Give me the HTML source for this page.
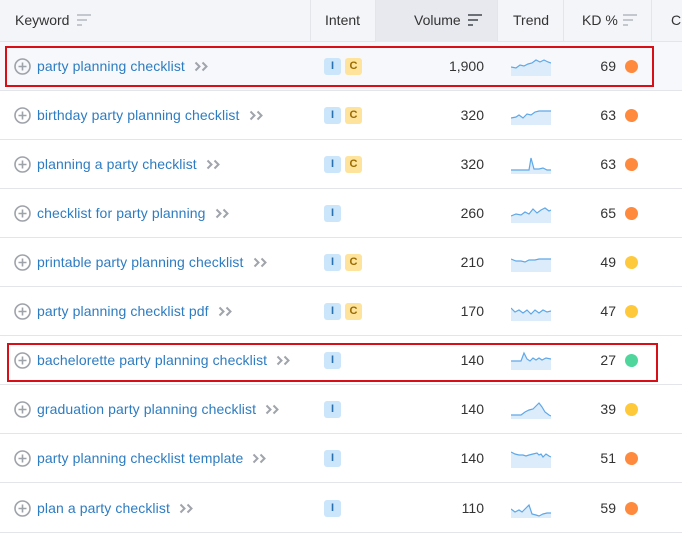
<!DOCTYPE html>
<html><head><meta charset="utf-8"><style>
*{margin:0;padding:0;box-sizing:border-box}
body{width:682px;height:535px;overflow:hidden;background:#fff;font-family:"Liberation Sans",sans-serif;font-size:14px;color:#333;position:relative}
.hdr{position:absolute;left:0;top:0;width:682px;height:42px;background:#f4f5f9;border-bottom:1px solid #e3e5ea}
.hv{position:absolute;left:375px;top:0;width:122px;height:42px;background:#e8e9ee}
.vl{position:absolute;top:0;width:1px;height:42px;background:#e3e5ea}
.ht{position:absolute;top:12px;color:#333;font-size:14px}
.si{position:absolute;top:14px}
.row{position:absolute;left:0;width:682px;height:49px;border-bottom:1px solid #e3e5ea}
.row.hl{background:#f7f8fb}
.plus{position:absolute;left:14px;top:16px;width:17px;height:17px}
.kw{position:absolute;left:37px;top:16px;color:#2d7cc1;white-space:nowrap;letter-spacing:0.1px}
.kw svg{margin-left:9px;vertical-align:-1px}
.bI,.bC{position:absolute;top:16px;width:17px;height:17px;border-radius:3px;font-size:11px;font-weight:bold;text-align:center;line-height:17px}
.bI{left:324px;background:#cbe5fb;color:#2a6fae}
.bC{left:345px;background:#fde39c;color:#9b6a00}
.vol{position:absolute;right:198px;top:16px}
.tr{position:absolute;left:511px;top:15px}
.kd{position:absolute;right:66px;top:16px}
.dot{position:absolute;left:625px;top:18px;width:13px;height:13px;border-radius:50%}
.o{background:#ff8a3d}.y{background:#ffc93c}.g{background:#4fd69c}
.box{position:absolute;border:2px solid #d90f17}
</style></head><body>
<div class="hdr">
<div class="hv"></div>
<div class="vl" style="left:310px"></div><div class="vl" style="left:375px"></div><div class="vl" style="left:497px"></div><div class="vl" style="left:563px"></div><div class="vl" style="left:651px"></div>
<div class="ht" style="left:15px">Keyword</div>
<svg class="si" style="left:77px" width="14" height="12"><g stroke="#c4c7cd" stroke-width="2"><line x1="0" y1="1" x2="14" y2="1"/><line x1="0" y1="6" x2="10" y2="6"/><line x1="0" y1="11" x2="5" y2="11"/></g></svg>
<div class="ht" style="left:325px">Intent</div>
<div class="ht" style="left:414px">Volume</div>
<svg class="si" style="left:468px" width="14" height="12"><g stroke="#6b6f76" stroke-width="2"><line x1="0" y1="1" x2="14" y2="1"/><line x1="0" y1="6" x2="10" y2="6"/><line x1="0" y1="11" x2="5" y2="11"/></g></svg>
<div class="ht" style="left:513px">Trend</div>
<div class="ht" style="left:582px">KD %</div>
<svg class="si" style="left:623px" width="14" height="12"><g stroke="#c4c7cd" stroke-width="2"><line x1="0" y1="1" x2="14" y2="1"/><line x1="0" y1="6" x2="10" y2="6"/><line x1="0" y1="11" x2="5" y2="11"/></g></svg>
<div class="ht" style="left:671px">C</div>
</div>

<div class="row hl" style="top:42px"><svg class="plus" viewBox="0 0 17 17"><circle cx="8.5" cy="8.5" r="7.5" fill="none" stroke="#9ea2a9" stroke-width="1.6"/><path d="M8.5 4.5v8M4.5 8.5h8" stroke="#9ea2a9" stroke-width="1.6"/></svg><div class="kw">party planning checklist<svg width="15" height="11"><path d="M1.5 1.5l4 4-4 4M8.5 1.5l4 4-4 4" fill="none" stroke="#a0a4ab" stroke-width="2"/></svg></div><div class="bI">I</div><div class="bC">C</div><div class="vol">1,900</div><svg class="tr" width="40" height="19"><polygon points="0,10 5,11 9,8 13,9 17,7 21,6 25,3 29,5 33,3 37,5 40,6 40,19 0,19" fill="#dcecfb"/><polyline points="0,10 5,11 9,8 13,9 17,7 21,6 25,3 29,5 33,3 37,5 40,6" fill="none" stroke="#5fa8e8" stroke-width="1.2"/></svg><div class="kd">69</div><div class="dot o"></div></div>

<div class="row" style="top:91px"><svg class="plus" viewBox="0 0 17 17"><circle cx="8.5" cy="8.5" r="7.5" fill="none" stroke="#9ea2a9" stroke-width="1.6"/><path d="M8.5 4.5v8M4.5 8.5h8" stroke="#9ea2a9" stroke-width="1.6"/></svg><div class="kw">birthday party planning checklist<svg width="15" height="11"><path d="M1.5 1.5l4 4-4 4M8.5 1.5l4 4-4 4" fill="none" stroke="#a0a4ab" stroke-width="2"/></svg></div><div class="bI">I</div><div class="bC">C</div><div class="vol">320</div><svg class="tr" width="40" height="19"><polygon points="0,12 5,11 8,9 12,12 16,8 20,9 24,6 28,5 40,5 40,19 0,19" fill="#dcecfb"/><polyline points="0,12 5,11 8,9 12,12 16,8 20,9 24,6 28,5 40,5" fill="none" stroke="#5fa8e8" stroke-width="1.2"/></svg><div class="kd">63</div><div class="dot o"></div></div>

<div class="row" style="top:140px"><svg class="plus" viewBox="0 0 17 17"><circle cx="8.5" cy="8.5" r="7.5" fill="none" stroke="#9ea2a9" stroke-width="1.6"/><path d="M8.5 4.5v8M4.5 8.5h8" stroke="#9ea2a9" stroke-width="1.6"/></svg><div class="kw">planning a party checklist<svg width="15" height="11"><path d="M1.5 1.5l4 4-4 4M8.5 1.5l4 4-4 4" fill="none" stroke="#a0a4ab" stroke-width="2"/></svg></div><div class="bI">I</div><div class="bC">C</div><div class="vol">320</div><svg class="tr" width="40" height="19"><polygon points="0,15 10,15 18,15 20,3 23,14 28,14 32,13 36,15 40,15 40,19 0,19" fill="#dcecfb"/><polyline points="0,15 10,15 18,15 20,3 23,14 28,14 32,13 36,15 40,15" fill="none" stroke="#5fa8e8" stroke-width="1.2"/></svg><div class="kd">63</div><div class="dot o"></div></div>

<div class="row" style="top:189px"><svg class="plus" viewBox="0 0 17 17"><circle cx="8.5" cy="8.5" r="7.5" fill="none" stroke="#9ea2a9" stroke-width="1.6"/><path d="M8.5 4.5v8M4.5 8.5h8" stroke="#9ea2a9" stroke-width="1.6"/></svg><div class="kw">checklist for party planning<svg width="15" height="11"><path d="M1.5 1.5l4 4-4 4M8.5 1.5l4 4-4 4" fill="none" stroke="#a0a4ab" stroke-width="2"/></svg></div><div class="bI">I</div><div class="vol">260</div><svg class="tr" width="40" height="19"><polygon points="0,12 5,10 10,11 14,8 18,10 22,5 26,9 30,6 34,4 38,7 40,6 40,19 0,19" fill="#dcecfb"/><polyline points="0,12 5,10 10,11 14,8 18,10 22,5 26,9 30,6 34,4 38,7 40,6" fill="none" stroke="#5fa8e8" stroke-width="1.2"/></svg><div class="kd">65</div><div class="dot o"></div></div>

<div class="row" style="top:238px"><svg class="plus" viewBox="0 0 17 17"><circle cx="8.5" cy="8.5" r="7.5" fill="none" stroke="#9ea2a9" stroke-width="1.6"/><path d="M8.5 4.5v8M4.5 8.5h8" stroke="#9ea2a9" stroke-width="1.6"/></svg><div class="kw">printable party planning checklist<svg width="15" height="11"><path d="M1.5 1.5l4 4-4 4M8.5 1.5l4 4-4 4" fill="none" stroke="#a0a4ab" stroke-width="2"/></svg></div><div class="bI">I</div><div class="bC">C</div><div class="vol">210</div><svg class="tr" width="40" height="19"><polygon points="0,6 5,8 10,8 14,9 18,7 24,7 28,6 34,6 40,6 40,19 0,19" fill="#dcecfb"/><polyline points="0,6 5,8 10,8 14,9 18,7 24,7 28,6 34,6 40,6" fill="none" stroke="#5fa8e8" stroke-width="1.2"/></svg><div class="kd">49</div><div class="dot y"></div></div>

<div class="row" style="top:287px"><svg class="plus" viewBox="0 0 17 17"><circle cx="8.5" cy="8.5" r="7.5" fill="none" stroke="#9ea2a9" stroke-width="1.6"/><path d="M8.5 4.5v8M4.5 8.5h8" stroke="#9ea2a9" stroke-width="1.6"/></svg><div class="kw">party planning checklist pdf<svg width="15" height="11"><path d="M1.5 1.5l4 4-4 4M8.5 1.5l4 4-4 4" fill="none" stroke="#a0a4ab" stroke-width="2"/></svg></div><div class="bI">I</div><div class="bC">C</div><div class="vol">170</div><svg class="tr" width="40" height="19"><polygon points="0,6 4,10 8,8 12,11 16,8 20,12 24,8 28,11 32,8 36,10 40,9 40,19 0,19" fill="#dcecfb"/><polyline points="0,6 4,10 8,8 12,11 16,8 20,12 24,8 28,11 32,8 36,10 40,9" fill="none" stroke="#5fa8e8" stroke-width="1.2"/></svg><div class="kd">47</div><div class="dot y"></div></div>

<div class="row" style="top:336px"><svg class="plus" viewBox="0 0 17 17"><circle cx="8.5" cy="8.5" r="7.5" fill="none" stroke="#9ea2a9" stroke-width="1.6"/><path d="M8.5 4.5v8M4.5 8.5h8" stroke="#9ea2a9" stroke-width="1.6"/></svg><div class="kw">bachelorette party planning checklist<svg width="15" height="11"><path d="M1.5 1.5l4 4-4 4M8.5 1.5l4 4-4 4" fill="none" stroke="#a0a4ab" stroke-width="2"/></svg></div><div class="bI">I</div><div class="vol">140</div><svg class="tr" width="40" height="19"><polygon points="0,10 10,10 13,2 16,8 19,10 22,7 25,9 28,7 31,9 35,7 40,8 40,19 0,19" fill="#dcecfb"/><polyline points="0,10 10,10 13,2 16,8 19,10 22,7 25,9 28,7 31,9 35,7 40,8" fill="none" stroke="#5fa8e8" stroke-width="1.2"/></svg><div class="kd">27</div><div class="dot g"></div></div>

<div class="row" style="top:385px"><svg class="plus" viewBox="0 0 17 17"><circle cx="8.5" cy="8.5" r="7.5" fill="none" stroke="#9ea2a9" stroke-width="1.6"/><path d="M8.5 4.5v8M4.5 8.5h8" stroke="#9ea2a9" stroke-width="1.6"/></svg><div class="kw">graduation party planning checklist<svg width="15" height="11"><path d="M1.5 1.5l4 4-4 4M8.5 1.5l4 4-4 4" fill="none" stroke="#a0a4ab" stroke-width="2"/></svg></div><div class="bI">I</div><div class="vol">140</div><svg class="tr" width="40" height="19"><polygon points="0,15 10,15 14,12 18,10 22,9 26,5 28,3 31,7 34,12 38,15 40,16 40,19 0,19" fill="#dcecfb"/><polyline points="0,15 10,15 14,12 18,10 22,9 26,5 28,3 31,7 34,12 38,15 40,16" fill="none" stroke="#5fa8e8" stroke-width="1.2"/></svg><div class="kd">39</div><div class="dot y"></div></div>

<div class="row" style="top:434px"><svg class="plus" viewBox="0 0 17 17"><circle cx="8.5" cy="8.5" r="7.5" fill="none" stroke="#9ea2a9" stroke-width="1.6"/><path d="M8.5 4.5v8M4.5 8.5h8" stroke="#9ea2a9" stroke-width="1.6"/></svg><div class="kw">party planning checklist template<svg width="15" height="11"><path d="M1.5 1.5l4 4-4 4M8.5 1.5l4 4-4 4" fill="none" stroke="#a0a4ab" stroke-width="2"/></svg></div><div class="bI">I</div><div class="vol">140</div><svg class="tr" width="40" height="19"><polygon points="0,3 4,5 8,6 12,6 15,7 18,6 22,5 26,4 28,6 30,5 32,8 35,5 38,7 40,8 40,19 0,19" fill="#dcecfb"/><polyline points="0,3 4,5 8,6 12,6 15,7 18,6 22,5 26,4 28,6 30,5 32,8 35,5 38,7 40,8" fill="none" stroke="#5fa8e8" stroke-width="1.2"/></svg><div class="kd">51</div><div class="dot o"></div></div>

<div class="row" style="top:484px"><svg class="plus" viewBox="0 0 17 17"><circle cx="8.5" cy="8.5" r="7.5" fill="none" stroke="#9ea2a9" stroke-width="1.6"/><path d="M8.5 4.5v8M4.5 8.5h8" stroke="#9ea2a9" stroke-width="1.6"/></svg><div class="kw">plan a party checklist<svg width="15" height="11"><path d="M1.5 1.5l4 4-4 4M8.5 1.5l4 4-4 4" fill="none" stroke="#a0a4ab" stroke-width="2"/></svg></div><div class="bI">I</div><div class="vol">110</div><svg class="tr" width="40" height="19"><polygon points="0,10 4,13 8,11 11,13 14,10 18,6 21,15 25,16 28,17 32,15 36,14 40,14 40,19 0,19" fill="#dcecfb"/><polyline points="0,10 4,13 8,11 11,13 14,10 18,6 21,15 25,16 28,17 32,15 36,14 40,14" fill="none" stroke="#5fa8e8" stroke-width="1.2"/></svg><div class="kd">59</div><div class="dot o"></div></div>

<div class="box" style="left:5px;top:46px;width:649px;height:41px"></div>
<div class="box" style="left:7px;top:343px;width:651px;height:39px"></div>
</body></html>
